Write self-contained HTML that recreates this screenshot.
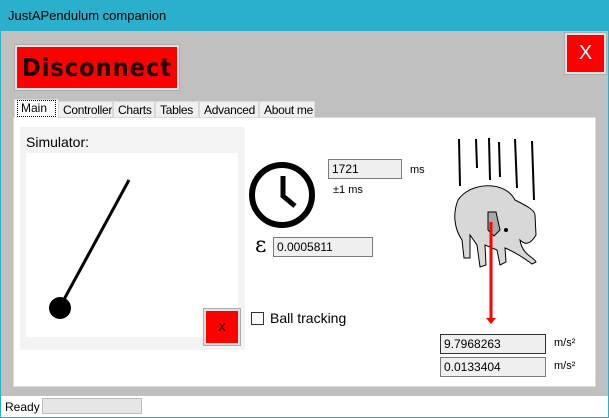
<!DOCTYPE html>
<html><head><style>
*{margin:0;padding:0;box-sizing:border-box}
body{width:609px;height:418px;position:relative;overflow:hidden;background:#c0c0c0;font-family:"Liberation Sans",sans-serif;font-size:12px;color:#000}
.a{position:absolute;white-space:nowrap}
.tb{position:absolute;background:#f0f0f0;border:1px solid #7a7a7a;font-size:12px;padding:2px 0 0 3px;color:#000}
.tab{position:absolute;top:101px;height:17px;background:#f0f0f0;border:1px solid #d9d9d9;font-size:12px;padding:1px 0 0 4px;white-space:nowrap;overflow:hidden;letter-spacing:-0.3px}
</style></head><body>
<div class="a" style="left:0;top:0;width:609px;height:31px;background:#2aafcd"></div>
<div class="a" style="left:8px;top:8px;font-size:13px;color:#000">JustAPendulum companion</div>
<div class="a" style="left:0;top:31px;width:1px;height:387px;background:#2aafcd"></div>
<div class="a" style="left:608px;top:31px;width:1px;height:387px;background:#2aafcd"></div>
<div class="a" style="left:0;top:417px;width:609px;height:1px;background:#2aafcd"></div>

<div class="a" style="left:14px;top:44px;width:166px;height:47px;background:#e0e0e0;border:1px solid #adadad"></div>
<div class="a" style="left:17px;top:47px;width:160px;height:41px;background:#f00;font-family:'DejaVu Sans Condensed','DejaVu Sans',sans-serif;font-weight:bold;font-size:25px;text-align:center;line-height:41px;color:#1a0000;letter-spacing:1px">Disconnect</div>

<div class="a" style="left:564px;top:32px;width:43px;height:43px;background:#e0e0e0;border:1px solid #adadad"></div>
<div class="a" style="left:567px;top:35px;width:37px;height:37px;background:#f00;color:#fff;font-size:20px;text-align:center;line-height:36px">X</div>

<div class="a" style="left:13px;top:117px;width:583px;height:270px;background:#fff;border:1px solid #dcdcdc"></div>
<div class="tab" style="left:58px;width:55px">Controller</div>
<div class="tab" style="left:113px;width:42px">Charts</div>
<div class="tab" style="left:155px;width:44px">Tables</div>
<div class="tab" style="left:199px;width:60px">Advanced</div>
<div class="tab" style="left:259px;width:56px">About me</div>
<div class="a" style="left:14px;top:99px;width:45px;height:19px;background:#fff;border:1px solid #d9d9d9;border-bottom:none"></div>
<div class="a" style="left:17px;top:100px;width:39px;height:17px;border:1px dotted #000;font-size:12px;padding:0 0 0 3px">Main</div>

<div class="a" style="left:20px;top:127px;width:225px;height:223px;background:#f3f3f3"></div>
<div class="a" style="left:26px;top:134px;font-size:14px">Simulator:</div>
<div class="a" style="left:26px;top:153px;width:212px;height:184px;background:#fff"></div>
<svg class="a" style="left:0;top:0" width="609" height="418"><line x1="129" y1="180" x2="61" y2="305" stroke="#000" stroke-width="3"/><circle cx="60" cy="308" r="11" fill="#000"/>
<circle cx="282" cy="195" r="30" fill="none" stroke="#000" stroke-width="6"/><polyline points="283,176 283,196 295,206" fill="none" stroke="#000" stroke-width="5"/>
<g stroke="#000" stroke-width="2"><line x1="459" y1="139" x2="460" y2="186"/><line x1="476" y1="139" x2="477" y2="168"/><line x1="489" y1="138" x2="490" y2="180"/><line x1="499" y1="142" x2="500" y2="177"/><line x1="515" y1="139" x2="517" y2="188"/><line x1="532" y1="141" x2="534" y2="200"/></g>
<g stroke="#000" stroke-width="1" fill="#d8d8d8"><path d="M458,200 C470,182 505,180 515,200 C525,205 535,210 535,215 L536,235 C530,245 525,245 520,240 C522,255 535,258 536,262 L532,264 C520,255 510,250 505,248 L506,262 L500,265 L497,250 L485,245 L486,265 L480,267 L477,245 L470,235 L470,258 L464,258 L462,240 C455,230 452,215 458,200Z"/><path d="M488,212 L496,212 L500,230 L494,236 L488,230Z" fill="#a8a8a8"/></g>
<circle cx="506" cy="230" r="2" fill="#000"/>
<line x1="491" y1="222" x2="491" y2="318" stroke="#f00" stroke-width="3"/><polygon points="486,318 496,318 491,324" fill="#f00"/></svg>
<div class="a" style="left:203px;top:308px;width:38px;height:38px;background:#e0e0e0;border:1px solid #adadad"></div>
<div class="a" style="left:206px;top:311px;width:32px;height:32px;background:#f00;font-size:15px;text-align:center;line-height:31px;color:#300">x</div>

<div class="tb" style="left:328px;top:159px;width:74px;height:20px">1721</div>
<div class="a" style="left:410px;top:164px;font-size:11px">ms</div>
<div class="a" style="left:333px;top:184px;font-size:11px">±1 ms</div>
<div class="a" style="left:255px;top:233px;font-size:22px;font-family:'DejaVu Serif',serif">ε</div>
<div class="tb" style="left:273px;top:237px;width:100px;height:20px">0.0005811</div>
<div class="a" style="left:251px;top:312px;width:13px;height:13px;border:1px solid #333;background:#fff"></div>
<div class="a" style="left:270px;top:310px;font-size:14px">Ball tracking</div>

<div class="tb" style="left:440px;top:334px;width:106px;height:20px;border-color:#333">9.7968263</div>
<div class="a" style="left:554px;top:337px;font-size:11px">m/s²</div>
<div class="tb" style="left:440px;top:357px;width:106px;height:20px">0.0133404</div>
<div class="a" style="left:554px;top:360px;font-size:11px">m/s²</div>

<div class="a" style="left:1px;top:396px;width:607px;height:21px;background:#fff"></div>
<div class="a" style="left:5px;top:400px;font-size:12px">Ready</div>
<div class="a" style="left:42px;top:398px;width:100px;height:16px;background:#e6e6e6;border:1px solid #bcbcbc"></div>
</body></html>
